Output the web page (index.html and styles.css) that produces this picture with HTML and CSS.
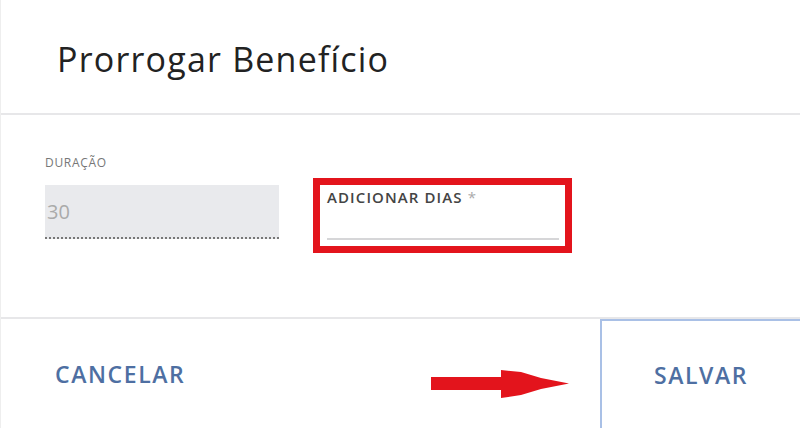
FILE: index.html
```html
<!DOCTYPE html>
<html lang="pt-br">
<head>
    <meta charset="UTF-8">
    <meta name="viewport" content="width=device-width, initial-scale=1.0">
    <title>Prorrogar Benefício</title>
    <link rel="stylesheet" href="styles.css">
</head>
<body>
    <div class="dialog">
        <div class="dialog-header">
            <h1>Prorrogar Benefício</h1>
        </div>

        <div class="dialog-body">
            <div class="field field-readonly">
                <label for="duracao">Duração</label>
                <input type="text" id="duracao" value="30" readonly>
            </div>
            <div class="field field-highlight">
                <label for="dias">Adicionar dias <span class="required">*</span></label>
                <input type="text" id="dias">
            </div>
        </div>

        <div class="dialog-footer">
            <button class="btn btn-cancel">Cancelar</button>
            <svg class="arrow" width="140" height="30" viewBox="0 0 140 30">
                <rect x="0" y="7" width="72" height="13" fill="#e3141c"/>
                <polygon points="70,0 90,2 110,8 138,13.5 110,19 90,25 70,28" fill="#e3141c"/>
            </svg>
            <button class="btn btn-save">Salvar</button>
        </div>
    </div>
</body>
</html>
```

FILE: styles.css
```css
body {
    margin: 0;
    font-family: "Open Sans", Arial, sans-serif;
    background-color: #fff;
}

.dialog {
    width: 800px;
    height: 428px;
    display: flex;
    flex-direction: column;
    border-left: 1px solid #eee;
    box-sizing: border-box;
}

.dialog-header {
    height: 115px;
    box-sizing: border-box;
    display: flex;
    align-items: center;
    padding: 4px 0 0 56px;
    border-bottom: 2px solid #e7e7e9;
}

.dialog-header h1 {
    margin: 0;
    font-size: 34px;
    font-weight: 400;
    letter-spacing: 1.2px;
    color: #222;
}

.dialog-body {
    height: 202px;
    box-sizing: border-box;
    display: flex;
    align-items: flex-start;
    gap: 34px;
    padding: 40px 0 0 44px;
}

.field label {
    display: block;
    text-transform: uppercase;
}

.field input {
    display: block;
    font-family: inherit;
    border: none;
    outline: none;
    box-sizing: border-box;
}

.field-readonly label {
    font-size: 12px;
    line-height: 16px;
    letter-spacing: 0.7px;
    color: #777;
    margin-bottom: 14px;
}

.field-readonly input {
    width: 234px;
    height: 54px;
    padding: 0 2px;
    font-size: 20px;
    color: #aaa;
    background-color: #e9eaed;
    border-bottom: 2px dotted #777;
}

.field-highlight {
    margin-top: 23px;
    width: 259px;
    height: 75px;
    box-sizing: border-box;
    border: 7px solid #e3141c;
    padding: 3px 6px 0 7px;
}

.field-highlight label {
    font-size: 15px;
    font-weight: 600;
    line-height: 18px;
    letter-spacing: 1.1px;
    color: #444;
}

.required {
    color: #aaa;
    font-weight: 400;
}

.field-highlight input {
    width: 100%;
    height: 34px;
    background: transparent;
    border-bottom: 2px solid #d6d6d8;
}

.dialog-footer {
    flex: 1;
    position: relative;
    display: flex;
    justify-content: space-between;
    border-top: 2px solid #e7e7e9;
}

.btn {
    font-family: inherit;
    font-size: 23px;
    font-weight: 600;
    letter-spacing: 1.6px;
    color: #4e6fa2;
    background: none;
    border: none;
    text-transform: uppercase;
    cursor: pointer;
}

.btn-cancel {
    padding: 0 0 0 54px;
}

.btn-save {
    width: 200px;
    border-left: 2px solid #a9c0e6;
    border-top: 2px solid #a9c0e6;
}

.arrow {
    position: absolute;
    left: 430px;
    top: 51px;
}
```
